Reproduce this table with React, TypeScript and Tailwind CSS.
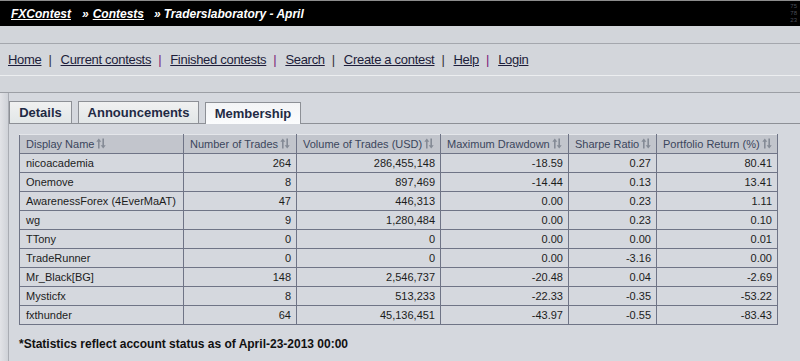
import React from "react";

const SortIcon = () => (
  <svg width="10" height="11" viewBox="0 0 10 11" className="inline-block ml-[2px] align-[-1px]">
    <path d="M2.8 0.5 L0.3 3.8 H2 V10.5 H3.6 V3.8 H5.3Z" fill="#858b96" />
    <path d="M7.2 10.5 L4.7 7.2 H6.4 V0.5 H8 V7.2 H9.7Z" fill="#858b96" />
  </svg>
);

const rows: [string, string, string, string, string, string][] = [
  ["nicoacademia", "264", "286,455,148", "-18.59", "0.27", "80.41"],
  ["Onemove", "8", "897,469", "-14.44", "0.13", "13.41"],
  ["AwarenessForex (4EverMaAT)", "47", "446,313", "0.00", "0.23", "1.11"],
  ["wg", "9", "1,280,484", "0.00", "0.23", "0.10"],
  ["TTony", "0", "0", "0.00", "0.00", "0.01"],
  ["TradeRunner", "0", "0", "0.00", "-3.16", "0.00"],
  ["Mr_Black[BG]", "148", "2,546,737", "-20.48", "0.04", "-2.69"],
  ["Mysticfx", "8", "513,233", "-22.33", "-0.35", "-53.22"],
  ["fxthunder", "64", "45,136,451", "-43.97", "-0.55", "-83.43"],
];

const headers = [
  { t: "Display Name", w: "w-[164px]" },
  { t: "Number of Trades", w: "w-[113px]" },
  { t: "Volume of Trades (USD)", w: "w-[144px]" },
  { t: "Maximum Drawdown", w: "w-[128px]" },
  { t: "Sharpe Ratio", w: "w-[88px]" },
  { t: "Portfolio Return (%)", w: "w-[121px]" },
];

const navItems: { label: string; sep?: string }[] = [
  { label: "Home", sep: "text-[#333]" },
  { label: "Current contests", sep: "text-[#7a1a7a]" },
  { label: "Finished contests", sep: "text-[#7a1a7a]" },
  { label: "Search", sep: "text-[#333]" },
  { label: "Create a contest", sep: "text-[#333]" },
  { label: "Help", sep: "text-[#7a1a7a]" },
  { label: "Login" },
];

export default function App() {
  return (
    <div className="w-[800px] h-[361px] overflow-hidden bg-[#d5d8de] font-['Liberation_Sans',Arial,sans-serif] flex flex-col relative">
      {/* top bar */}
      <div className="h-px bg-[#8c8c8c]" />
      <div className="h-[25px] bg-black flex items-center pl-[11px] text-white text-[12px] font-bold italic">
        <span className="underline">FXContest</span>
        <span className="ml-[11px] mr-[4px]">»</span>
        <span className="underline">Contests</span>
        <span className="ml-[10px] mr-[3px]">»</span>
        <span>Traderslaboratory - April</span>
      </div>
      <div className="absolute right-[3px] top-[3px] flex flex-col text-[6px] leading-[7px] text-[#4a4e5a]">
        <span>75</span>
        <span>78</span>
        <span>23</span>
      </div>
      <div className="h-[18px] bg-[#d2d5da] border-b border-[#a4a7ad]" />
      {/* nav */}
      <div className="h-[32px] bg-[#d3d6db] flex items-center pl-[8px] pt-[1px] text-[13px] tracking-[-0.3px] text-[#1d1d3a] border-b border-[#eceef0]">
        {navItems.map((n) => (
          <React.Fragment key={n.label}>
            <span className="underline">{n.label}</span>
            {n.sep && <span className={`${n.sep} ml-[7px] mr-[9px]`}>|</span>}
          </React.Fragment>
        ))}
      </div>
      <div className="h-[17px] bg-[#d2d5da] border-b border-[#9c9fa5]" />
      {/* content */}
      <div className="flex-1 flex">
        <div className="w-[9px] bg-gradient-to-r from-[#e2e3e7] to-[#cfd2d8] border-r border-[#a9acb3]" />
        <div className="flex-1 flex flex-col">
          {/* tabs */}
          <div className="flex items-end h-[30px] pt-[8px] relative z-10">
            <div className="h-[22px] w-[63px] border border-b-0 border-[#8d9096] bg-gradient-to-b from-[#f0f1f1] to-[#e2e6e7] flex items-center justify-center text-[13px] font-bold text-[#1f2a44]">
              Details
            </div>
            <div className="ml-[6px] h-[22px] w-[121px] border border-b-0 border-[#8d9096] bg-gradient-to-b from-[#f0f1f1] to-[#e2e6e7] flex items-center justify-center text-[13px] font-bold text-[#1f2a44]">
              Announcements
            </div>
            <div className="ml-[6px] h-[22px] w-[96px] border border-b-0 border-[#8d9096] bg-gradient-to-b from-[#f3f4f6] to-[#fbfcfd] flex items-center justify-center text-[13px] font-bold text-[#1f2a44] -mb-px">
              Membership
            </div>
          </div>
          <div className="flex-1 border-t border-[#8d9096] pl-[10px] pt-[10px]">
            <table className="table-fixed border-collapse w-[759px] text-[11px]">
              <thead>
                <tr className="h-[19px] bg-[#c2c5cc]">
                  {headers.map((h) => (
                    <th
                      key={h.t}
                      className={`${h.w} border border-[#6f7486] pl-[6px] pr-[5px] text-left font-normal text-[#3b465c] whitespace-nowrap border-t-[#e4e6ea]`}
                    >
                      {h.t}
                      <SortIcon />
                    </th>
                  ))}
                </tr>
              </thead>
              <tbody>
                {rows.map((r) => (
                  <tr key={r[0]} className="h-[19px]">
                    {r.map((c, i) => (
                      <td
                        key={i}
                        className={`border border-[#6f7486] pl-[6px] pr-[5px] text-[#1c1c1c] whitespace-nowrap ${
                          i === 0 ? "text-left" : "text-right"
                        }`}
                      >
                        {c}
                      </td>
                    ))}
                  </tr>
                ))}
              </tbody>
            </table>
            <div className="mt-[10px] text-[12px] font-bold text-[#111]">
              *Statistics reflect account status as of April-23-2013 00:00
            </div>
          </div>
        </div>
      </div>
    </div>
  );
}
